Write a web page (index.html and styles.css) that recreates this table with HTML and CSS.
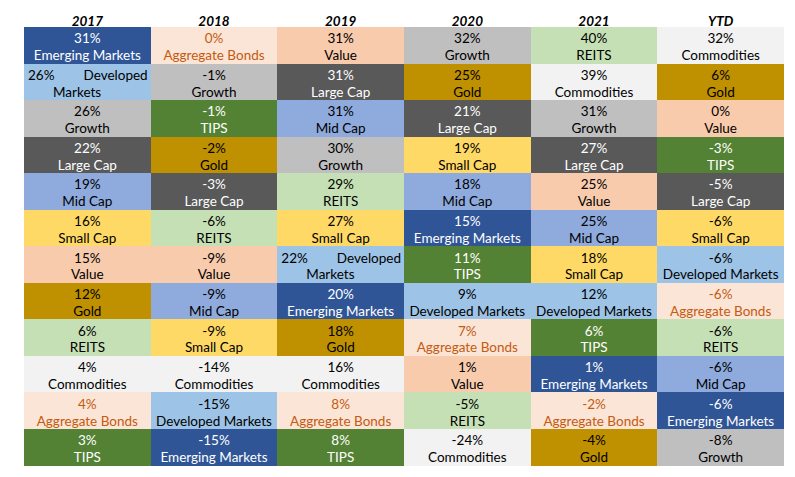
FILE: index.html
```html
<!DOCTYPE html>
<html>
<head>
<meta charset="utf-8">
<link rel="stylesheet" href="styles.css">
</head>
<body>
<div class="page">
  <div class="table">
    <div class="hd">2017</div><div class="hd">2018</div><div class="hd">2019</div><div class="hd">2020</div><div class="hd">2021</div><div class="hd">YTD</div>

    <div class="cell em"><span>31%</span><span>Emerging Markets</span></div>
    <div class="cell ab"><span>0%</span><span>Aggregate Bonds</span></div>
    <div class="cell val"><span>31%</span><span>Value</span></div>
    <div class="cell gr"><span>32%</span><span>Growth</span></div>
    <div class="cell re"><span>40%</span><span>REITS</span></div>
    <div class="cell co"><span>32%</span><span>Commodities</span></div>

    <div class="cell dm just"><span class="jl"><span>26%</span><span>Developed</span></span><span class="jt">Markets</span></div>
    <div class="cell gr"><span>-1%</span><span>Growth</span></div>
    <div class="cell lc"><span>31%</span><span>Large Cap</span></div>
    <div class="cell go"><span>25%</span><span>Gold</span></div>
    <div class="cell co"><span>39%</span><span>Commodities</span></div>
    <div class="cell go"><span>6%</span><span>Gold</span></div>

    <div class="cell gr"><span>26%</span><span>Growth</span></div>
    <div class="cell ti"><span>-1%</span><span>TIPS</span></div>
    <div class="cell mc"><span>31%</span><span>Mid Cap</span></div>
    <div class="cell lc"><span>21%</span><span>Large Cap</span></div>
    <div class="cell gr"><span>31%</span><span>Growth</span></div>
    <div class="cell val"><span>0%</span><span>Value</span></div>

    <div class="cell lc"><span>22%</span><span>Large Cap</span></div>
    <div class="cell go"><span>-2%</span><span>Gold</span></div>
    <div class="cell gr"><span>30%</span><span>Growth</span></div>
    <div class="cell sc"><span>19%</span><span>Small Cap</span></div>
    <div class="cell lc"><span>27%</span><span>Large Cap</span></div>
    <div class="cell ti"><span>-3%</span><span>TIPS</span></div>

    <div class="cell mc"><span>19%</span><span>Mid Cap</span></div>
    <div class="cell lc"><span>-3%</span><span>Large Cap</span></div>
    <div class="cell re"><span>29%</span><span>REITS</span></div>
    <div class="cell mc"><span>18%</span><span>Mid Cap</span></div>
    <div class="cell val"><span>25%</span><span>Value</span></div>
    <div class="cell lc"><span>-5%</span><span>Large Cap</span></div>

    <div class="cell sc"><span>16%</span><span>Small Cap</span></div>
    <div class="cell re"><span>-6%</span><span>REITS</span></div>
    <div class="cell sc"><span>27%</span><span>Small Cap</span></div>
    <div class="cell em"><span>15%</span><span>Emerging Markets</span></div>
    <div class="cell mc"><span>25%</span><span>Mid Cap</span></div>
    <div class="cell sc"><span>-6%</span><span>Small Cap</span></div>

    <div class="cell val"><span>15%</span><span>Value</span></div>
    <div class="cell val"><span>-9%</span><span>Value</span></div>
    <div class="cell dm just"><span class="jl"><span>22%</span><span>Developed</span></span><span class="jt">Markets</span></div>
    <div class="cell ti"><span>11%</span><span>TIPS</span></div>
    <div class="cell sc"><span>18%</span><span>Small Cap</span></div>
    <div class="cell dm"><span>-6%</span><span>Developed Markets</span></div>

    <div class="cell go"><span>12%</span><span>Gold</span></div>
    <div class="cell mc"><span>-9%</span><span>Mid Cap</span></div>
    <div class="cell em"><span>20%</span><span>Emerging Markets</span></div>
    <div class="cell dm"><span>9%</span><span>Developed Markets</span></div>
    <div class="cell dm"><span>12%</span><span>Developed Markets</span></div>
    <div class="cell ab"><span>-6%</span><span>Aggregate Bonds</span></div>

    <div class="cell re"><span>6%</span><span>REITS</span></div>
    <div class="cell sc"><span>-9%</span><span>Small Cap</span></div>
    <div class="cell go"><span>18%</span><span>Gold</span></div>
    <div class="cell ab"><span>7%</span><span>Aggregate Bonds</span></div>
    <div class="cell ti"><span>6%</span><span>TIPS</span></div>
    <div class="cell re"><span>-6%</span><span>REITS</span></div>

    <div class="cell co"><span>4%</span><span>Commodities</span></div>
    <div class="cell co"><span>-14%</span><span>Commodities</span></div>
    <div class="cell co"><span>16%</span><span>Commodities</span></div>
    <div class="cell val"><span>1%</span><span>Value</span></div>
    <div class="cell em"><span>1%</span><span>Emerging Markets</span></div>
    <div class="cell mc"><span>-6%</span><span>Mid Cap</span></div>

    <div class="cell ab"><span>4%</span><span>Aggregate Bonds</span></div>
    <div class="cell dm"><span>-15%</span><span>Developed Markets</span></div>
    <div class="cell ab"><span>8%</span><span>Aggregate Bonds</span></div>
    <div class="cell re"><span>-5%</span><span>REITS</span></div>
    <div class="cell ab"><span>-2%</span><span>Aggregate Bonds</span></div>
    <div class="cell em"><span>-6%</span><span>Emerging Markets</span></div>

    <div class="cell ti"><span>3%</span><span>TIPS</span></div>
    <div class="cell em"><span>-15%</span><span>Emerging Markets</span></div>
    <div class="cell ti"><span>8%</span><span>TIPS</span></div>
    <div class="cell co"><span>-24%</span><span>Commodities</span></div>
    <div class="cell go"><span>-4%</span><span>Gold</span></div>
    <div class="cell gr"><span>-8%</span><span>Growth</span></div>
  </div>
</div>
</body>
</html>
```
FILE: styles.css
```css
html, body {
  margin: 0;
  padding: 0;
  background: #ffffff;
}
.page {
  padding: 11px 0 0 24px;
  font-family: Lato, "Open Sans", sans-serif;
  font-size: 13.5px;
  color: #000;
}
.table {
  display: grid;
  width: 760px;
  grid-template-columns: repeat(6, 1fr);
  grid-template-rows: 16px repeat(12, 36.55px);
}
.hd {
  font-weight: bold;
  font-style: italic;
  text-align: center;
  font-size: 13.5px;
  line-height: 16px;
  padding-top: 2px;
}
.cell {
  display: flex;
  flex-direction: column;
  justify-content: center;
  align-items: center;
  line-height: 16.8px;
  padding-top: 3.5px;
  box-sizing: border-box;
  white-space: nowrap;
}
.cell.just {
  align-items: stretch;
}
.jl {
  display: flex;
  justify-content: space-between;
  padding: 0 3px 0 4px;
}
.jt {
  align-self: flex-start;
  padding-left: 29px;
}
.em { background: #2F5597; color: #fff; }
.ab { background: #FBE5D6; color: #C55A11; }
.val { background: #F8CBAD; }
.gr { background: #BFBFBF; }
.re { background: #C5E0B4; }
.co { background: #F2F2F2; }
.dm { background: #9DC3E6; }
.lc { background: #595959; color: #fff; }
.go { background: #BF9000; }
.ti { background: #548235; color: #fff; }
.mc { background: #8FAADC; }
.sc { background: #FFD966; }
```
